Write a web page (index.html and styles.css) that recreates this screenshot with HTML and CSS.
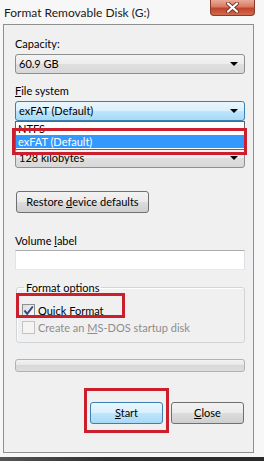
FILE: index.html
```html
<!DOCTYPE html>
<html lang="en">
<head>
    <meta charset="UTF-8">
    <title>Format Removable Disk (G:)</title>
    <link rel="stylesheet" href="styles.css">
</head>
<body>
    <div class="window">
        <div class="titlebar">
            <span class="title">Format Removable Disk (G:)</span>
            <span class="close-btn">
                <svg width="15" height="11" viewBox="0 0 15 11">
                    <path d="M3 1.5 L12 9.5 M12 1.5 L3 9.5" stroke="#7a3328" stroke-width="4" stroke-linecap="round"/>
                    <path d="M3 1.5 L12 9.5 M12 1.5 L3 9.5" stroke="#ffffff" stroke-width="2.2" stroke-linecap="round"/>
                </svg>
            </span>
        </div>

        <div class="client">
            <div class="label lbl-capacity">Capacity:</div>
            <div class="combo">60.9 GB<span class="arrow"></span></div>

            <div class="label lbl-fs"><u>F</u>ile system</div>
            <div class="combo-wrap">
                <div class="combo focused">exFAT (Default)<span class="arrow"></span></div>
                <!-- open drop-down list -->
                <div class="droplist">
                    <div class="item">NTFS</div>
                    <div class="item selected">exFAT (Default)</div>
                </div>
                <div class="mark mark-list"></div>
            </div>

            <div class="combo combo-alloc">128 kilobytes<span class="arrow"></span></div>

            <div class="btn btn-restore">Restore <u>d</u>evice defaults</div>

            <div class="label lbl-volume">Volume <u>l</u>abel</div>
            <div class="textbox"></div>

            <fieldset class="group">
                <legend>Format options</legend>
                <div class="check-row first">
                    <span class="checkbox checked">
                        <svg width="11" height="11" viewBox="0 0 11 11">
                            <path d="M1.5 5.5 L4.2 8.8 L9.8 1.5" fill="none" stroke="#34488a" stroke-width="2"/>
                        </svg>
                    </span>
                    <span><u>Q</u>uick Format</span>
                    <div class="mark mark-quick"></div>
                </div>
                <div class="check-row disabled">
                    <span class="checkbox"></span>
                    <span>Create an <u>M</u>S-DOS startup disk</span>
                </div>
            </fieldset>

            <div class="progress"></div>

            <div class="buttons">
                <div class="start-wrap">
                    <div class="btn btn-default"><u>S</u>tart</div>
                    <div class="mark mark-start"></div>
                </div>
                <div class="btn btn-close"><u>C</u>lose</div>
            </div>
        </div>

        <div class="frame-bottom"></div>
    </div>
</body>
</html>
```

FILE: styles.css
```css
/* Windows 7 style format dialog */
html, body {
    margin: 0;
    padding: 0;
}

body {
    width: 264px;
    height: 461px;
    overflow: hidden;
    background-color: #f7f7f7;
    font-family: 'Lato', 'Noto Sans', sans-serif;
    font-size: 11px;
    color: #000;
}

u {
    text-decoration: underline;
    text-underline-offset: 1px;
}

.window {
    height: 461px;
    display: flex;
    flex-direction: column;
}

/* Title bar */
.titlebar {
    height: 25px;
    display: flex;
    justify-content: space-between;
    align-items: flex-start;
    padding-left: 4px;
}

.title {
    font-size: 12px;
    line-height: 15px;
    margin-top: 5px;
    color: #1a1a1a;
}

.close-btn {
    width: 43px;
    height: 15px;
    margin-right: 9px;
    border: 1px solid #8a3a2e;
    border-top: none;
    border-radius: 0 0 4px 4px;
    background: linear-gradient(#e9aa98, #d97a62 45%, #c2442a 55%, #cf6a4f);
    display: flex;
    justify-content: center;
    align-items: center;
}

/* Client area */
.client {
    flex: none;
    height: 427px;
    margin: 0 10px 0 3px;
    padding: 0 8px 0 11px;
    border: 1px solid #8e8f8f;
    background-color: #f0f0f0;
    display: flex;
    flex-direction: column;
}

.label {
    line-height: 15px;
    height: 15px;
}

.lbl-capacity { margin-top: 11px; }
.lbl-fs { margin-top: 9px; }
.lbl-volume { margin-top: 20px; }

/* Combo boxes */
.combo {
    position: relative;
    height: 18px;
    margin-top: 3px;
    padding-left: 3px;
    line-height: 18px;
    border: 1px solid #8e8f8f;
    border-radius: 3px;
    background: linear-gradient(#f4f4f4, #ececec 50%, #dfdfdf 50%, #d8d8d8);
}

.combo.focused {
    border-color: #3c7fb1;
    background: linear-gradient(#eaf6fd, #d9f0fc 50%, #bee6fd 50%, #a7d9f5);
}

.combo-alloc {
    margin-top: 27px;
}

.arrow {
    position: absolute;
    right: 6px;
    top: 7px;
    width: 0;
    height: 0;
    border-left: 4px solid transparent;
    border-right: 4px solid transparent;
    border-top: 4px solid #000;
}

.combo-wrap {
    position: relative;
    z-index: 2;
}

.droplist {
    position: absolute;
    top: 100%;
    left: 0;
    right: 0;
    background-color: #fff;
    border: 1px solid #646464;
    padding-bottom: 1px;
}

.item {
    height: 13px;
    line-height: 13px;
    padding-left: 2px;
    overflow: hidden;
}

.item.selected {
    background-color: #3399ff;
    color: #fff;
}

/* red annotation boxes */
.mark {
    position: absolute;
    border: 3px solid #cc1f2d;
    z-index: 3;
}

.mark-list {
    top: 30px;
    left: -3px;
    right: -2px;
    height: 21px;
}

.mark-quick {
    top: -9px;
    left: -6px;
    width: 103px;
    height: 19px;
}

.mark-start {
    top: -14px;
    left: -6px;
    right: -6px;
    bottom: -9px;
}

/* Buttons */
.btn {
    height: 20px;
    line-height: 20px;
    text-align: center;
    border: 1px solid #707070;
    border-radius: 3px;
    background: linear-gradient(#f2f2f2, #ebebeb 50%, #dddddd 50%, #cfcfcf);
}

.btn-restore {
    width: 131px;
    margin-top: 23px;
    margin-left: 1px;
}

.btn-default {
    width: 71px;
    border-color: #3c7fb1;
    background: linear-gradient(#eaf6fd, #d9f0fc 50%, #bee6fd 50%, #a7d9f5);
}

.btn-close {
    width: 71px;
}

.textbox {
    height: 18px;
    margin-top: 2px;
    border: 1px solid #abadb3;
    border-left-color: #e2e3ea;
    border-right-color: #dbdfe6;
    border-bottom-color: #e3e9ef;
    background-color: #fff;
}

/* Format options group */
.group {
    margin: 10px 0 0 1px;
    padding: 0 6px 6px 5px;
    border: 1px solid #d0d5d9;
    border-radius: 3px;
    box-shadow: inset 1px 1px 0 #fff;
}

.group legend {
    padding: 0 2px;
    margin-left: 2px;
    line-height: 15px;
}

.check-row {
    position: relative;
    display: flex;
    align-items: center;
    gap: 3px;
    height: 17px;
}

.check-row.first {
    margin-top: 7px;
}

.check-row.disabled {
    color: #8d8d8d;
}

.checkbox {
    width: 11px;
    height: 11px;
    border: 1px solid #8e8f8f;
    background: linear-gradient(135deg, #dcdcdc, #fbfbfb);
    display: flex;
    justify-content: center;
    align-items: center;
}

.check-row.disabled .checkbox {
    border-color: #c4c4c4;
    background: #f4f4f4;
}

.progress {
    height: 11px;
    margin-top: 16px;
    border: 1px solid #b2b2b2;
    border-radius: 3px;
    background: linear-gradient(#f3f3f3, #e6e6e6 50%, #d8d8d8 50%, #dedede);
}

.buttons {
    display: flex;
    justify-content: flex-end;
    gap: 8px;
    margin-top: 30px;
    padding-right: 1px;
}

.start-wrap {
    position: relative;
}

.frame-bottom {
    height: 4px;
    margin-top: 4px;
    background: linear-gradient(90deg, #555 0%, #2f2f2f 40%, #2a2a2a 100%);
}
```
